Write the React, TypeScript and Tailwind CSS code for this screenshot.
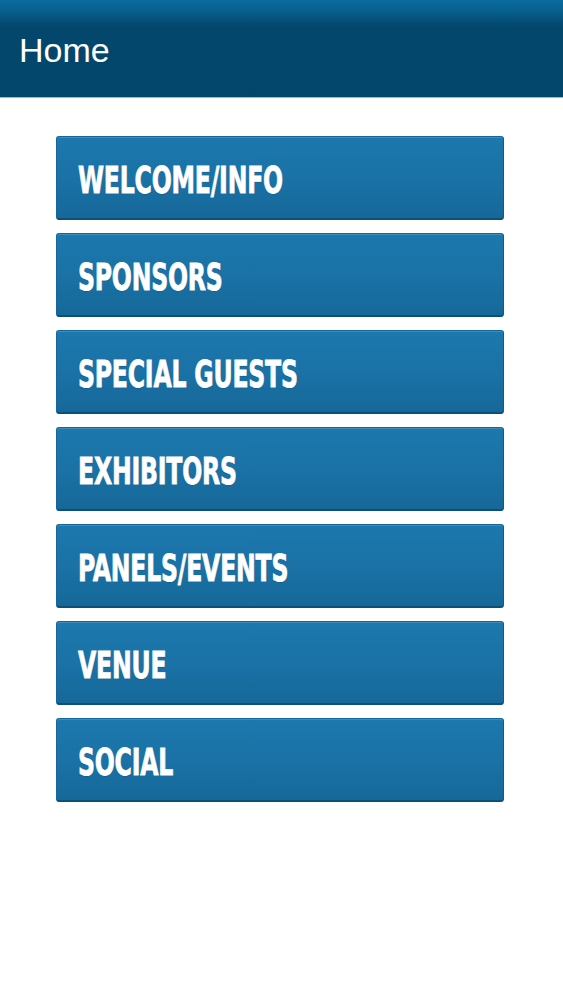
import React from "react";

const items = [
  "WELCOME/INFO",
  "SPONSORS",
  "SPECIAL GUESTS",
  "EXHIBITORS",
  "PANELS/EVENTS",
  "VENUE",
  "SOCIAL",
];

export default function App() {
  return (
    <div className="min-h-[1000px] w-full bg-white">
      <header className="h-[98px] w-full bg-[linear-gradient(to_bottom,#0a6c9f_0px,#07618f_10px,#03476d_26px,#03466b_100%)] border-b border-b-[#8cc0de] flex items-center">
        <h1
          className="pl-[19px] text-[34px] leading-none text-white mt-[2px]"
          style={{ fontFamily: '"Liberation Sans", Arial, sans-serif' }}
        >
          Home
        </h1>
      </header>
      <nav className="flex flex-col gap-[13px] px-[56px] pt-[38px] w-[560px]">
        {items.map((label) => (
          <button
            key={label}
            className="h-[84px] w-[448px] rounded-[3px] bg-[linear-gradient(to_bottom,#1c78ad,#1a72a6_50%,#166899)] border border-[#14679a] border-b-[2px] border-b-[#0d5077] border-r-[#0f5a86] shadow-[inset_0_1px_0_rgba(255,255,255,0.15)] flex items-center pl-[21px] pt-[4px] text-left"
          >
            <span
              className="text-white font-bold text-[38px] leading-none tracking-[-0.3px] origin-left scale-x-[0.69] whitespace-nowrap [text-shadow:0_1px_1px_rgba(0,0,0,0.25)] [-webkit-text-stroke:0.8px_white]"
              style={{
                fontFamily:
                  '"DejaVu Sans Condensed", "Liberation Sans", sans-serif',
              }}
            >
              {label}
            </span>
          </button>
        ))}
      </nav>
    </div>
  );
}
